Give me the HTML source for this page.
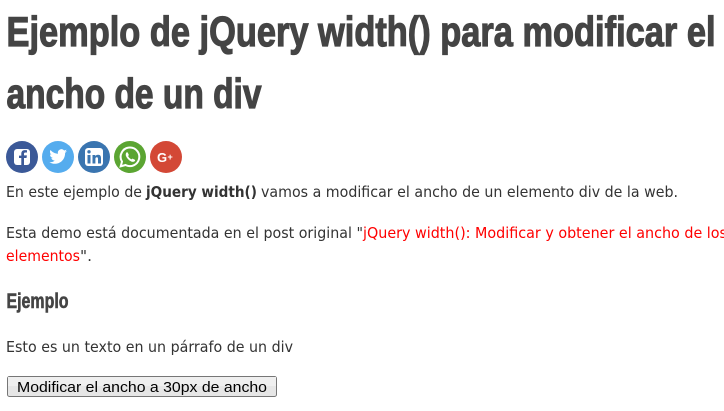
<!DOCTYPE html>
<html><head><meta charset="utf-8"><style>
html,body{margin:0;padding:0;background:#fff;width:724px;height:411px;overflow:hidden}
svg{display:block}
.h{font-family:"Liberation Sans Narrow","Liberation Sans",sans-serif;font-weight:bold;fill:#444;stroke:#444;stroke-width:1.2px}
.b{font-family:"DejaVu Sans","Liberation Sans",sans-serif;font-size:15px;fill:#333}
.r{fill:#f00}
</style></head><body>
<svg width="724" height="411" viewBox="0 0 724 411" xmlns="http://www.w3.org/2000/svg">
<text class="h" x="6.5" y="46" font-size="42" textLength="709" lengthAdjust="spacingAndGlyphs">Ejemplo de jQuery width() para modificar el</text>
<text class="h" x="6.5" y="108" font-size="42" textLength="255" lengthAdjust="spacingAndGlyphs">ancho de un div</text>

<g>
<circle cx="22" cy="157" r="16" fill="#3b5998"/>
<rect x="14" y="149" width="16" height="16" rx="3" fill="#fff"/>
<path d="M24 165v-7h2.5l.4-2.6H24v-1.6c0-.8.3-1.3 1.4-1.3H27v-2.3c-.4 0-1.2-.1-2.2-.1-2.2 0-3.5 1.3-3.5 3.6v1.9H19V158h2.3v7z" fill="#3b5998"/>
<circle cx="58" cy="157" r="16" fill="#55acee"/>
<path d="M67 151c-.7.3-1.4.5-2.1.6.8-.5 1.3-1.2 1.600-2-.7.4-1.5.7-2.3.9a3.6 3.6 0 0 0-6.2 3.3c-3-.2-5.7-1.6-7.5-3.8-1 1.7-.4 3.800 1.1 4.8-.6 0-1.1-.2-1.6-.4 0 1.8 1.2 3.3 2.9 3.6-.5.2-1.1.2-1.6.1.5 1.4 1.8 2.5 3.4 2.5-1.5 1.2-3.4 1.8-5.3 1.6 1.6 1 3.5 1.6 5.5 1.6 6.7 0 10.4-5.7 10.2-10.9.7-.5 1.3-1.1 1.8-1.9z" fill="#fff"/>
<circle cx="94" cy="157" r="16" fill="#3a75b0"/>
<rect x="85" y="148" width="18" height="18" rx="3" fill="#fff"/>
<rect x="87.5" y="155" width="3" height="8.5" fill="#3a75b0"/>
<circle cx="89" cy="151.8" r="1.7" fill="#3a75b0"/>
<path d="M92.5 155h2.8v1.3c.5-.9 1.5-1.5 2.8-1.5 2.3 0 2.9 1.4 2.9 3.5v5.2h-3v-4.6c0-1-.2-1.7-1.2-1.7s-1.4.7-1.4 1.7v4.6h-2.9z" fill="#3a75b0"/>
<circle cx="130" cy="157" r="16" fill="#5ba532"/>
<path d="M130 147.5a9.3 9.3 0 0 0-8 14.1l-1.3 4.7 4.9-1.3a9.3 9.3 0 1 0 4.4-17.5z" fill="none" stroke="#fff" stroke-width="2"/>
<path d="M126.5 152.5c.5-.4 1-.3 1.3.2l1 2c.1.4-.3.9-.7 1.3.7 1.5 1.9 2.7 3.4 3.4.4-.4.9-.9 1.3-.7l2 1c.4.3.5.9.1 1.3-1.2 1.3-3 1.100-5.2-.4-2-1.4-3.5-3.5-3.9-5.2-.2-1.3.2-2.4.7-2.9z" fill="#fff"/>
<circle cx="166" cy="157" r="16" fill="#d34836"/>
<text x="157" y="162" font-family="Liberation Sans,sans-serif" font-weight="bold" font-size="13" fill="#fff">G</text>
<text x="167.5" y="160" font-family="Liberation Sans,sans-serif" font-weight="bold" font-size="9" fill="#fff">+</text>
</g>

<text class="b" x="6" y="197" textLength="136" lengthAdjust="spacingAndGlyphs">En este ejemplo de</text>
<text class="b" x="146" y="197" font-weight="bold" textLength="111" lengthAdjust="spacingAndGlyphs">jQuery width()</text>
<text class="b" x="261" y="197" textLength="417" lengthAdjust="spacingAndGlyphs">vamos a modificar el ancho de un elemento div de la web.</text>

<text class="b" x="6" y="238" textLength="357" lengthAdjust="spacingAndGlyphs">Esta demo está documentada en el post original "</text>
<text class="b r" x="363" y="238" textLength="364" lengthAdjust="spacingAndGlyphs">jQuery width(): Modificar y obtener el ancho de los</text>
<text class="b r" x="6" y="261" textLength="74" lengthAdjust="spacingAndGlyphs">elementos</text>
<text class="b" x="80" y="261" textLength="12" lengthAdjust="spacingAndGlyphs">".</text>

<text class="h" x="6.5" y="308" font-size="21" style="stroke-width:.6px" textLength="62" lengthAdjust="spacingAndGlyphs">Ejemplo</text>

<text class="b" x="6" y="352" textLength="287" lengthAdjust="spacingAndGlyphs">Esto es un texto en un párrafo de un div</text>

<rect x="7.5" y="376.5" width="269" height="20" rx="2" fill="#e6e6e6" stroke="#767676"/>
<rect x="8" y="377" width="268" height="9" fill="#efefef"/>
<text x="17" y="392" font-family="Liberation Sans,sans-serif" font-size="15" fill="#000" textLength="250" lengthAdjust="spacingAndGlyphs">Modificar el ancho a 30px de ancho</text>
</svg>
</body></html>
